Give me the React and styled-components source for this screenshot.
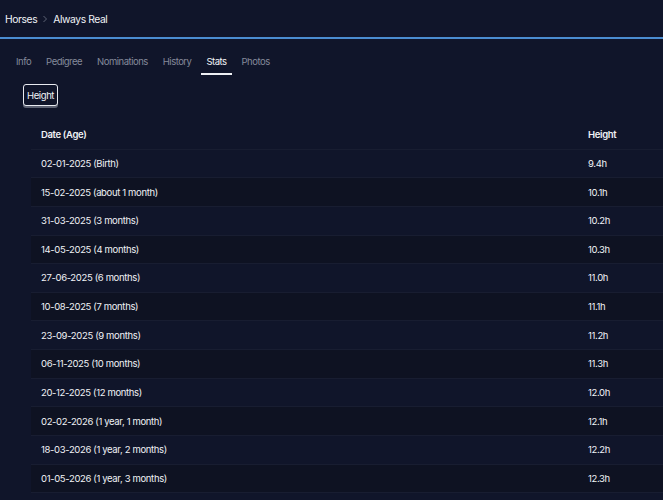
import styled, { createGlobalStyle } from "styled-components";

const rows = [
  ["02-01-2025 (Birth)", "9.4h"],
  ["15-02-2025 (about 1 month)", "10.1h"],
  ["31-03-2025 (3 months)", "10.2h"],
  ["14-05-2025 (4 months)", "10.3h"],
  ["27-06-2025 (6 months)", "11.0h"],
  ["10-08-2025 (7 months)", "11.1h"],
  ["23-09-2025 (9 months)", "11.2h"],
  ["06-11-2025 (10 months)", "11.3h"],
  ["20-12-2025 (12 months)", "12.0h"],
  ["02-02-2026 (1 year, 1 month)", "12.1h"],
  ["18-03-2026 (1 year, 2 months)", "12.2h"],
  ["01-05-2026 (1 year, 3 months)", "12.3h"],
];

const tabs = ["Info", "Pedigree", "Nominations", "History", "Stats", "Photos"];

const Global = createGlobalStyle`
  body {
    margin: 0;
    background: #10152a;
    font-family: Inter, "Noto Sans", sans-serif;
    color: #e6e8ee;
    overflow: hidden;
  }
`;

const TopBar = styled.header`
  height: 37px;
  display: flex;
  align-items: center;
  gap: 5px;
  padding: 0 5px;
  border-bottom: 2px solid #4a8cd0;
  font-size: 10.3px;
  letter-spacing: -0.4px;
  color: #f1f3f7;
`;

const Chevron = styled.svg`
  width: 6px;
  height: 8px;
`;

const Tabs = styled.nav`
  display: flex;
  gap: 5px;
  padding: 12px 11px 0;
`;

const Tab = styled.div`
  padding: 5px 5px 6px;
  font-size: 9.5px;
  letter-spacing: -0.5px;
  color: ${(p) => (p.$active ? "#f3f5f9" : "#858a9a")};
  border-bottom: 2px solid ${(p) => (p.$active ? "#eef0f4" : "transparent")};
`;

const Toolbar = styled.div`
  display: flex;
  padding: 9px 23px 15px;
`;

const Chip = styled.button`
  font-family: inherit;
  font-size: 9.5px;
  letter-spacing: -0.4px;
  color: #f1f3f7;
  background: #10152a;
  border: 1.5px solid #e8eaf0;
  border-radius: 3px;
  padding: 5px 3px 4px;
  box-shadow: 0 2px 0 #5c6172;
`;

const Table = styled.div`
  margin-left: 31px;
  width: 660px;
`;

const Row = styled.div`
  box-sizing: border-box;
  display: grid;
  grid-template-columns: 547px 1fr;
  align-items: center;
  height: 28.64px;
  padding-left: 10px;
  font-size: 9.5px;
  letter-spacing: -0.35px;
  font-weight: ${(p) => (p.$head ? 600 : 400)};
  background: ${(p) => (p.$alt ? "#0e1222" : "#10152a")};
  border-bottom: 1px solid #181d31;
  color: #f0f2f6;
`;

export default function App() {
  return (
    <>
      <Global />
      <TopBar>
        <span>Horses</span>
        <Chevron viewBox="0 0 6 8">
          <path d="M1.5 1l3 3-3 3" fill="none" stroke="#5d6375" strokeWidth="1" />
        </Chevron>
        <span>Always Real</span>
      </TopBar>
      <Tabs>
        {tabs.map((t) => (
          <Tab key={t} $active={t === "Stats"}>
            {t}
          </Tab>
        ))}
      </Tabs>
      <Toolbar>
        <Chip>Height</Chip>
      </Toolbar>
      <Table>
        <Row $head>
          <span>Date (Age)</span>
          <span>Height</span>
        </Row>
        {rows.map(([d, h], i) => (
          <Row key={d} $alt={i % 2 === 1}>
            <span>{d}</span>
            <span>{h}</span>
          </Row>
        ))}
      </Table>
    </>
  );
}
